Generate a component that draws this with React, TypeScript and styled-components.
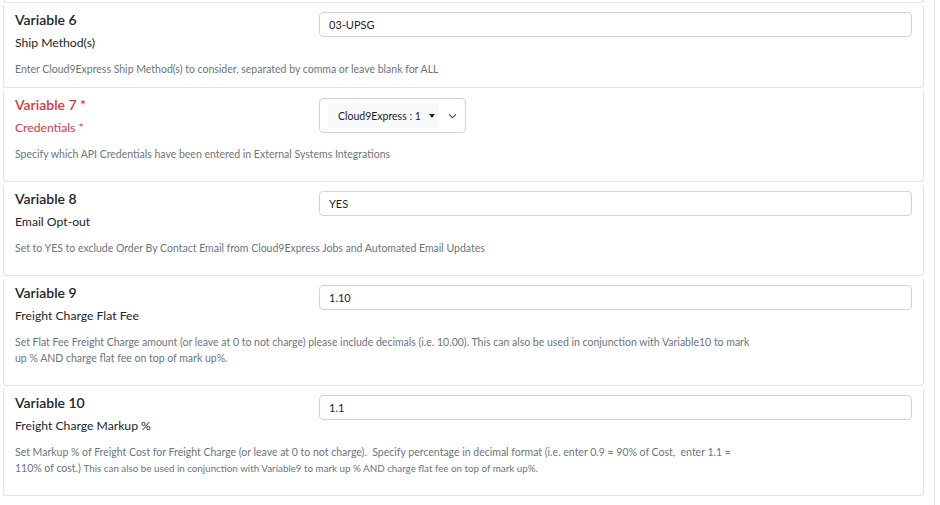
import styled, { createGlobalStyle } from "styled-components";

const GlobalStyle = createGlobalStyle`
  body {
    margin: 0;
    background: #fff;
    font-family: Lato, "Liberation Sans", sans-serif;
    color: #212529;
  }
`;

// Contenedor de la lista, con el borde derecho del panel
const Panel = styled.div`
  width: 934px;
  min-height: 100vh;
  border-right: 1px solid #dee2e6;
  overflow: hidden;
`;

const List = styled.div`
  display: flex;
  flex-direction: column;
  gap: 3px;
  margin-top: -37px;
`;

const Card = styled.section<{ $tight?: boolean }>`
  margin-left: 3px;
  width: 921px;
  box-sizing: border-box;
  border: 1px solid #dee2e6;
  border-top: none;
  border-radius: 0 0 4px 4px;
  padding: 5px 11px ${(p) => (p.$tight ? "10px" : "19px")};
`;

const Stub = styled(Card)`
  height: 40px;
  padding: 0;
`;

const Row = styled.div`
  display: grid;
  grid-template-columns: 304px 1fr;
`;

const Title = styled.div<{ $required?: boolean }>`
  font-size: 14px;
  font-weight: 600;
  line-height: 18px;
  color: ${(p) => (p.$required ? "#dc3545" : "#212529")};
`;

const Subtitle = styled.div<{ $required?: boolean }>`
  margin-top: 5px;
  font-size: 12.2px;
  line-height: 18px;
  color: ${(p) => (p.$required ? "#dc3545" : "#212529")};
`;

const Help = styled.p`
  margin: 9px 0 0;
  max-width: 740px;
  font-size: 10.5px;
  line-height: 16px;
  color: #6c757d;

  small {
    font-size: 9.8px;
    line-height: 16px;
  }
`;

const TextInput = styled.input`
  margin-top: 1px;
  height: 25px;
  box-sizing: border-box;
  width: 593px;
  padding: 0 9px;
  border: 1px solid #ced4da;
  border-radius: 4px;
  font-family: inherit;
  font-size: 11px;
  color: #212529;
  background: #fff;
  outline: none;
`;

const SelectBox = styled.div`
  margin-top: 2px;
  width: 147px;
  height: 35px;
  box-sizing: border-box;
  display: flex;
  align-items: center;
  gap: 9px;
  padding: 0 8px;
  border: 1px solid #ced4da;
  border-radius: 4px;
`;

const SelectValue = styled.button`
  width: 112px;
  height: 25px;
  display: flex;
  align-items: center;
  gap: 8px;
  padding: 0 0 0 10px;
  border: none;
  border-radius: 4px;
  background: #f8f9fa;
  font-family: inherit;
  font-size: 10.5px;
  color: #212529;
  white-space: nowrap;

  &::after {
    content: "";
    border-left: 3px solid transparent;
    border-right: 3px solid transparent;
    border-top: 4px solid #212529;
  }
`;

const Chevron = () => (
  <svg width="9" height="6" viewBox="0 0 9 6" fill="none">
    <path d="M1 1.3l3.5 3.4L8 1.3" stroke="#495057" strokeWidth="1.1" />
  </svg>
);

const App = () => {
  return (
    <>
      <GlobalStyle />
      <Panel>
        <List>
          <Stub />

          <Card $tight>
            <Row>
              <div>
                <Title>Variable 6</Title>
                <Subtitle>Ship Method(s)</Subtitle>
              </div>
              <TextInput readOnly defaultValue="03-UPSG" />
            </Row>
            <Help>Enter Cloud9Express Ship Method(s) to consider, separated by comma or leave blank for ALL</Help>
          </Card>

          <Card>
            <Row>
              <div>
                <Title $required>Variable 7 *</Title>
                <Subtitle $required>Credentials *</Subtitle>
              </div>
              <div>
                <SelectBox>
                  <SelectValue>Cloud9Express : 1</SelectValue>
                  <Chevron />
                </SelectBox>
              </div>
            </Row>
            <Help>Specify which API Credentials have been entered in External Systems Integrations</Help>
          </Card>

          <Card>
            <Row>
              <div>
                <Title>Variable 8</Title>
                <Subtitle>Email Opt-out</Subtitle>
              </div>
              <TextInput readOnly defaultValue="YES" />
            </Row>
            <Help>Set to YES to exclude Order By Contact Email from Cloud9Express Jobs and Automated Email Updates</Help>
          </Card>

          <Card>
            <Row>
              <div>
                <Title>Variable 9</Title>
                <Subtitle>Freight Charge Flat Fee</Subtitle>
              </div>
              <TextInput readOnly defaultValue="1.10" />
            </Row>
            <Help>
              Set Flat Fee Freight Charge amount (or leave at 0 to not charge) please include decimals (i.e. 10.00). This
              can also be used in conjunction with Variable10 to mark up % AND charge flat fee on top of mark up%.
            </Help>
          </Card>

          <Card>
            <Row>
              <div>
                <Title>Variable 10</Title>
                <Subtitle>Freight Charge Markup %</Subtitle>
              </div>
              <TextInput readOnly defaultValue="1.1" />
            </Row>
            <Help>
              Set Markup % of Freight Cost for Freight Charge (or leave at 0 to not charge).&nbsp; Specify percentage in
              decimal format (i.e. enter 0.9 = 90% of Cost,&nbsp; enter 1.1 = 110% of cost.){" "}
              <small>This can also be used in conjunction with Variable9 to mark up % AND charge flat fee on top of mark up%.</small>
            </Help>
          </Card>
        </List>
      </Panel>
    </>
  );
};

export default App;
